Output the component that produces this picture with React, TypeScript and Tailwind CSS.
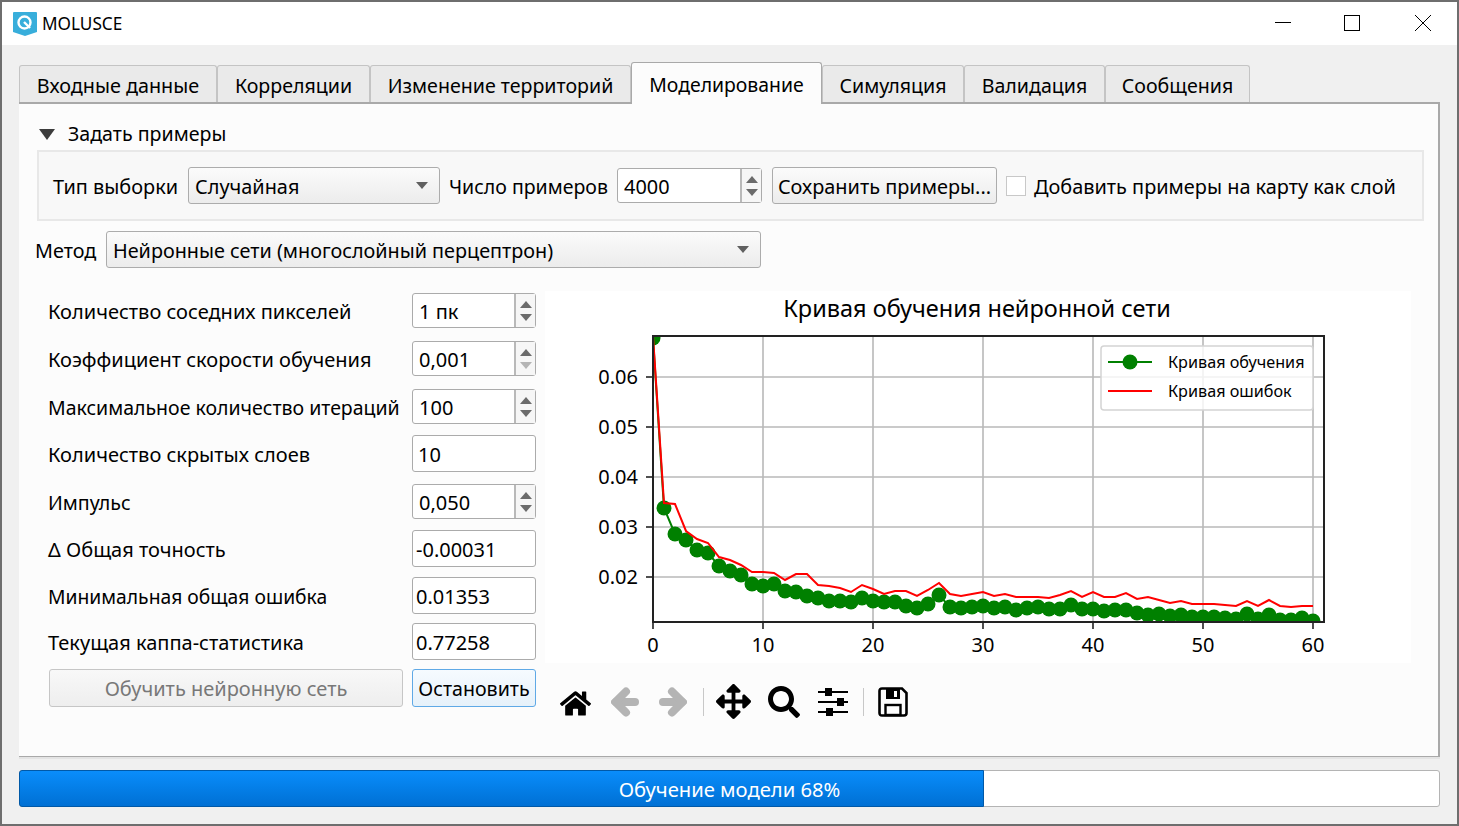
import React from "react";
import { FaHome, FaArrowsAlt, FaSearch } from "react-icons/fa";

const tabs = [
  { label: "Входные данные", w: "w-[198px] text-[19.8px]" },
  { label: "Корреляции", w: "w-[153px]" },
  { label: "Изменение территорий", w: "w-[261px]" },
  { label: "Моделирование", w: "w-[191px] text-[19.4px]", active: true },
  { label: "Симуляция", w: "w-[142px]" },
  { label: "Валидация", w: "w-[141px]" },
  { label: "Сообщения", w: "w-[145px]" },
];

const learn = [338, 508, 534, 540, 550, 553, 566, 571, 575, 584, 586, 584, 591, 592, 596, 598, 601, 601, 602, 598, 601, 602, 602, 606, 608, 604, 595, 607, 608, 607, 606, 608, 607, 610, 608, 607, 609, 609, 605, 609, 609, 611, 610, 610, 613, 615, 614, 616, 615, 617, 617, 617, 618, 619, 614, 619, 615, 620, 620, 618, 621];
const errors = [336, 503, 504, 531, 539, 543, 557, 560, 565, 572, 572, 573, 580, 574, 574, 585, 586, 588, 592, 585, 589, 594, 591, 591, 596, 590, 583, 594, 596, 594, 592, 596, 594, 597, 597, 597, 598, 595, 591, 597, 592, 597, 597, 593, 599, 597, 600, 603, 601, 604, 604, 604, 605, 606, 601, 606, 600, 606, 607, 606, 606];

const toPoints = (ys: number[]) =>
  ys.map((y, i) => `${653 + 11 * i},${y}`).join(" ");

function Arrows({ downDisabled }: { downDisabled?: boolean }) {
  return (
    <div className="flex h-full flex-col items-center justify-center gap-[6px]">
      <svg width="12" height="7" viewBox="0 0 12 7">
        <path d="M6 0 L12 7 L0 7 Z" fill="#6b6b6b" />
      </svg>
      <svg width="12" height="7" viewBox="0 0 12 7">
        <path d="M0 0 L12 0 L6 7 Z" fill={downDisabled ? "#b4b4b4" : "#6b6b6b"} />
      </svg>
    </div>
  );
}

function SpinBox({ value, downDisabled, width = "w-[124px]", arrows = "w-[21px]" }: { value: string; downDisabled?: boolean; width?: string; arrows?: string }) {
  return (
    <div className={`flex h-[35px] shrink-0 rounded-[3px] border border-[#ababab] bg-white ${width}`}>
      <div className="flex flex-1 items-center pl-[6px] pt-[2px]">{value}</div>
      <div className={`border-l-2 border-[#b9b9b9] bg-[#f6f6f6] ${arrows}`}>
        <Arrows downDisabled={downDisabled} />
      </div>
    </div>
  );
}

function TextField({ value, pad = "pl-[5px]" }: { value: string; pad?: string }) {
  return (
    <div className={`flex h-[37px] w-[124px] shrink-0 items-center rounded-[3px] border border-[#ababab] bg-white pt-[2px] ${pad}`}>
      {value}
    </div>
  );
}

function Combo({ value, width }: { value: string; width: string }) {
  return (
    <div className={`flex h-[37px] shrink-0 items-center justify-between rounded-[3px] border border-[#acacac] bg-linear-to-b from-[#fbfbfb] to-[#ececec] pl-[6px] pr-[11px] ${width}`}>
      <span className="pt-[2px]">{value}</span>
      <svg width="12" height="7" viewBox="0 0 12 7">
        <path d="M0 0 L12 0 L6 7 Z" fill="#606060" />
      </svg>
    </div>
  );
}

function FormRow({ label, margin, children, size = "" }: { label: string; margin: string; children: React.ReactNode; size?: string }) {
  return (
    <div className={`flex items-center ${margin}`}>
      <div className={`w-[364px] shrink-0 whitespace-nowrap pt-[2px] ${size}`}>{label}</div>
      {children}
    </div>
  );
}

function NavArrow({ flip, className }: { flip?: boolean; className?: string }) {
  return (
    <svg width="28" height="30" viewBox="0 0 28 30" className={className}>
      <g transform={flip ? "matrix(-1 0 0 1 28 0)" : undefined} fill="none" stroke="#b4b4b4" strokeWidth="8" strokeLinecap="round">
        <path d="M24 15 H5" />
        <path d="M15 4.5 L4.5 15 L15 25.5" />
      </g>
    </svg>
  );
}

function SlidersIcon() {
  return (
    <svg width="30" height="28" viewBox="0 0 30 28" className="block">
      <g stroke="#000" strokeWidth="2" fill="none">
        <path d="M0 4 H30" />
        <path d="M0 14 H30" />
        <path d="M0 24 H30" />
      </g>
      <rect x="7" y="0" width="7" height="8" fill="#000" />
      <rect x="19" y="10" width="7" height="8" fill="#000" />
      <rect x="8" y="20" width="7" height="8" fill="#000" />
    </svg>
  );
}

function SaveIcon({ className }: { className?: string }) {
  return (
    <svg width="30" height="30" viewBox="0 0 30 30" className={className}>
      <path d="M1.5 4 Q1.5 1.5 4 1.5 H24 L28.5 6 V26 Q28.5 28.5 26 28.5 H4 Q1.5 28.5 1.5 26 Z" fill="none" stroke="#000" strokeWidth="2.6" />
      <rect x="8" y="2" width="14" height="10" fill="#000" />
      <rect x="16" y="4" width="3" height="6" fill="#fff" />
      <rect x="7.5" y="18" width="15" height="10" fill="none" stroke="#000" strokeWidth="2.4" />
    </svg>
  );
}

function Chart() {
  const vertical = [0, 10, 20, 30, 40, 50, 60];
  const horizontal = [
    { y: 377, label: "0.06" },
    { y: 427, label: "0.05" },
    { y: 477, label: "0.04" },
    { y: 527, label: "0.03" },
    { y: 577, label: "0.02" },
  ];
  return (
    <svg width="866" height="372" viewBox="545 291 866 372" className="block bg-white">
      <defs>
        <clipPath id="axes-clip">
          <rect x="653" y="336" width="671" height="286" />
        </clipPath>
      </defs>
      <text x="977" y="317" textAnchor="middle" fontSize="23.5" fill="#000">
        Кривая обучения нейронной сети
      </text>
      {vertical.map((v) => {
        const x = 653 + 11 * v;
        return (
          <g key={v}>
            <line x1={x} x2={x} y1="336" y2="622" stroke="#b8b8b8" strokeWidth="1.6" />
            <line x1={x} x2={x} y1="622" y2="629" stroke="#222" strokeWidth="1.6" />
            <text x={x} y="652" textAnchor="middle" fontSize="20" fill="#000">
              {v}
            </text>
          </g>
        );
      })}
      {horizontal.map((h) => (
        <g key={h.y}>
          <line x1="653" x2="1324" y1={h.y} y2={h.y} stroke="#b8b8b8" strokeWidth="1.6" />
          <line x1="646" x2="653" y1={h.y} y2={h.y} stroke="#222" strokeWidth="1.6" />
          <text x="638" y={h.y + 7} textAnchor="end" fontSize="20" fill="#000">
            {h.label}
          </text>
        </g>
      ))}
      <g clipPath="url(#axes-clip)">
        <polyline points={toPoints(learn)} fill="none" stroke="#008000" strokeWidth="2" />
        {learn.map((y, i) => (
          <circle key={i} cx={653 + 11 * i} cy={y} r="7.5" fill="#008000" />
        ))}
        <polyline points={toPoints(errors)} fill="none" stroke="#ff0000" strokeWidth="2" />
      </g>
      <rect x="653" y="336" width="671" height="286" fill="none" stroke="#222" strokeWidth="2" />
      <rect x="1101" y="346" width="212" height="64" rx="3" fill="#fff" fillOpacity="0.8" stroke="#d4d4d4" strokeWidth="1.5" />
      <line x1="1108" x2="1152" y1="362" y2="362" stroke="#008000" strokeWidth="2" />
      <circle cx="1130" cy="362" r="7.5" fill="#008000" />
      <line x1="1108" x2="1152" y1="391" y2="391" stroke="#ff0000" strokeWidth="2" />
      <text x="1168" y="368" fontSize="16.2" fill="#000">
        Кривая обучения
      </text>
      <text x="1168" y="397" fontSize="16.2" fill="#000">
        Кривая ошибок
      </text>
    </svg>
  );
}

export default function App() {
  return (
    <div className="flex h-[826px] w-[1459px] flex-col overflow-hidden border-2 border-[#6e6e6e] bg-[#f0f0f0] font-['Noto_Sans',sans-serif] text-[20px] leading-none text-black">
      {/* title bar */}
      <div className="flex h-[43px] shrink-0 items-center bg-white pl-[11px]">
        <svg width="24" height="24" viewBox="0 0 24 24">
          <path d="M0 1 Q0 0 1 0 H23 Q24 0 24 1 V20 L12 24 L0 20 Z" fill="#38aedb" />
          <circle cx="11.5" cy="10.5" r="6" fill="none" stroke="#fff" strokeWidth="2.4" />
          <path d="M11 10 L17 16" stroke="#fff" strokeWidth="2.4" />
        </svg>
        <span className="ml-[5px] text-[17.2px]">MOLUSCE</span>
        <div className="ml-auto -mt-[2px] flex items-center">
          <div className="h-px w-[16px] bg-black" />
          <div className="ml-[53px] h-[16px] w-[16px] border border-black" />
          <svg className="ml-[55px] mr-[26px]" width="16" height="16" viewBox="0 0 16 16">
            <path d="M0 0 L16 16 M16 0 L0 16" stroke="#000" strokeWidth="1" />
          </svg>
        </div>
      </div>

      <div className="flex flex-1 flex-col pl-[17px] pr-[17px]">
        {/* tabs */}
        <div className="mt-[17px] flex h-[40px] shrink-0 items-end text-[19.6px]">
          {tabs.map((t) =>
            t.active ? (
              <div key={t.label} className={`z-10 -mb-[2px] flex h-[42px] items-center justify-center rounded-t-[3px] border border-b-0 border-[#a9a9a9] bg-[#fcfcfc] pt-[2px] ${t.w}`}>
                {t.label}
              </div>
            ) : (
              <div key={t.label} className={`flex h-[37px] items-center justify-center rounded-t-[3px] border border-b-0 border-[#c4c4c4] bg-[#eaeaea] pt-[3px] ${t.w}`}>
                {t.label}
              </div>
            )
          )}
        </div>

        {/* tab panel */}
        <div className="h-[655px] w-[1421px] shrink-0 border-t-2 border-r-2 border-b border-[#a9a9a9] bg-[#fcfcfc]">
          <div className="mt-[15px] flex h-[30px] items-center pl-[20px] text-[19.6px]">
            <svg width="16" height="11" viewBox="0 0 16 11">
              <path d="M0 0 L16 0 L8 11 Z" fill="#3c3c3c" />
            </svg>
            <span className="ml-[13px]">Задать примеры</span>
          </div>

          <div className="ml-[18px] mt-[1px] flex h-[71px] w-[1387px] items-center border-2 border-[#e8e8e8] bg-[#f8f8f8] pl-[14px] text-[19.9px]">
            <span className="w-[135px] shrink-0 whitespace-nowrap pt-[2px]">Тип выборки</span>
            <Combo value="Случайная" width="w-[252px]" />
            <span className="ml-[9px] w-[168px] shrink-0 whitespace-nowrap pt-[2px] text-[19.5px]">Число примеров</span>
            <SpinBox value="4000" width="w-[145px]" />
            <div className="ml-[10px] flex h-[37px] w-[225px] shrink-0 items-center justify-center rounded-[3px] border border-[#acacac] bg-linear-to-b from-[#fbfbfb] to-[#ececec] pt-[2px]">
              Сохранить примеры...
            </div>
            <div className="ml-[9px] h-[20px] w-[20px] shrink-0 border border-[#c8c8c8] bg-white" />
            <span className="ml-[8px] whitespace-nowrap pt-[2px]">Добавить примеры на карту как слой</span>
          </div>

          <div className="ml-[16px] mt-[10px] flex items-center text-[19.8px]">
            <span className="w-[71px] shrink-0 pt-[2px]">Метод</span>
            <Combo value="Нейронные сети (многослойный перцептрон)" width="w-[655px]" />
          </div>

          <div className="mt-[23px] flex">
            <div className="ml-[29px] w-[488px] shrink-0 pt-[2px]">
              <FormRow label="Количество соседних пикселей" margin="">
                <SpinBox value="1 пк" />
              </FormRow>
              <FormRow label="Коэффициент скорости обучения" margin="mt-[13px]">
                <SpinBox value="0,001" downDisabled />
              </FormRow>
              <FormRow label="Максимальное количество итераций" margin="mt-[13px]" size="text-[19.5px]">
                <SpinBox value="100" />
              </FormRow>
              <FormRow label="Количество скрытых слоев" margin="mt-[11px]">
                <TextField value="10" />
              </FormRow>
              <FormRow label="Импульс" margin="mt-[12px]" size="text-[19.6px]">
                <SpinBox value="0,050" />
              </FormRow>
              <FormRow label="Δ Общая точность" margin="mt-[11px]">
                <TextField value="-0.00031" pad="pl-[3px]" />
              </FormRow>
              <FormRow label="Минимальная общая ошибка" margin="mt-[10px]" size="text-[19.3px]">
                <TextField value="0.01353" pad="pl-[3px]" />
              </FormRow>
              <FormRow label="Текущая каппа-статистика" margin="mt-[9px]">
                <TextField value="0.77258" pad="pl-[3px]" />
              </FormRow>
              <div className="mt-[9px] flex">
                <div className="ml-px flex h-[38px] w-[354px] items-center justify-center rounded-[3px] border border-[#c6c6c6] bg-linear-to-b from-[#f8f8f8] to-[#eeeeee] pt-[2px] text-[#787878]">
                  Обучить нейронную сеть
                </div>
                <div className="ml-[9px] flex h-[38px] w-[124px] items-center justify-center rounded-[3px] border border-[#5fa9e6] bg-linear-to-b from-[#f6fbff] to-[#e6f1fa] pt-[2px] text-[19.6px]">
                  Остановить
                </div>
              </div>
            </div>

            <div className="ml-[9px] flex flex-col">
              <Chart />
              <div className="mt-[21px] flex h-[36px] items-center pl-[15px]">
                <FaHome size={31} color="#000" className="mt-[2px]" />
                <NavArrow className="ml-[20px]" />
                <NavArrow flip className="ml-[20px]" />
                <div className="ml-[16px] h-[28px] w-px bg-[#c8c8c8]" />
                <FaArrowsAlt size={35} color="#000" className="-mt-[2px] ml-[12px]" />
                <FaSearch size={32} color="#000" className="ml-[17px]" />
                <div className="ml-[18px]">
                  <SlidersIcon />
                </div>
                <div className="ml-[15px] h-[28px] w-px bg-[#c8c8c8]" />
                <SaveIcon className="ml-[14px]" />
              </div>
            </div>
          </div>
        </div>
        <div className="h-[2px] w-[1421px] shrink-0 bg-[#e4e4e4]" />

        {/* progress */}
        <div className="relative mt-[11px] h-[37px] w-[1421px] shrink-0 rounded-[3px] border border-[#b4b4b4] bg-white">
          <div className="absolute -left-px -top-px h-[37px] w-[965px] rounded-l-[3px] border border-[#0059a8] bg-linear-to-b from-[#0a8dfb] to-[#0070d4]" />
          <div className="absolute inset-0 flex items-center justify-center pt-[2px] text-[20.2px] text-white">Обучение модели 68%</div>
        </div>
      </div>
    </div>
  );
}
